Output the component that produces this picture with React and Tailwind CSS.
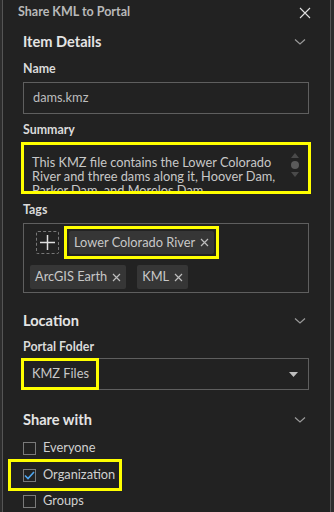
import React from "react";

const Chevron = () => (
  <svg width="12" height="8" viewBox="0 0 12 8" fill="none" stroke="#9a9a9a" strokeWidth="1.2">
    <path d="M1 1.5 L6 6 L11 1.5" />
  </svg>
);

const SmallX = () => (
  <svg width="9" height="9" viewBox="0 0 9 9" stroke="#bdbdbd" strokeWidth="1.2">
    <path d="M1 1 L8 8 M8 1 L1 8" />
  </svg>
);

const Tag = ({ label, className = "" }) => (
  <div className={`flex items-center gap-[5px] h-[23px] px-[5px] bg-[#363636] text-[12.8px] text-[#c8c8c8] rounded-[2px] ${className}`}>
    <span>{label}</span>
    <SmallX />
  </div>
);

const Check = ({ checked, label }) => (
  <div className="flex items-center h-[26px]">
    <div className="w-[13px] h-[13px] border border-[#7a7a7a] flex items-center justify-center">
      {checked && (
        <svg width="11" height="9" viewBox="0 0 11 9" fill="none" stroke="#4ea6f0" strokeWidth="1.6">
          <path d="M1 4.5 L4 7.5 L10 1" />
        </svg>
      )}
    </div>
    <span className="ml-[7px] text-[12.8px] text-[#d0d0d0]">{label}</span>
  </div>
);

export default function App() {
  return (
    <div className="w-[334px] h-[512px] overflow-hidden bg-[#2d2d2d] font-['Lato',sans-serif]">
      <div className="ml-[2px] w-[329px] h-full bg-[#222222] border-l border-r border-[#555]">
        <div className="flex items-center justify-between h-[25px] pl-[15px] pr-[19px]">
          <span className="text-[12.5px] font-bold text-[#b9b9b9]">Share KML to Portal</span>
          <svg width="12" height="12" viewBox="0 0 12 12" stroke="#e0e0e0" strokeWidth="1.1">
            <path d="M1 1 L11 11 M11 1 L1 11" />
          </svg>
        </div>

        <div className="pl-[20px] pr-[21px]">
          <div className="flex items-center justify-between h-[32px] mt-[1px]">
            <span className="text-[14.6px] font-bold text-[#e4e4e4]">Item Details</span>
            <span className="mr-[3px]"><Chevron /></span>
          </div>

          <div className="h-[20px] flex items-center mt-[1px] text-[12.4px] font-bold text-[#dadada]">Name</div>
          <div className="mt-[3px] h-[32px] border border-[#5f5f5f] flex items-center pl-[9px] text-[12.8px] text-[#bdbdbd]">
            dams.kmz
          </div>

          <div className="h-[20px] flex items-center mt-[6px] text-[12.4px] font-bold text-[#dadada]">Summary</div>
          <div className="mt-[2px] -mx-[2px] h-[52px] border-[3px] border-[#ffff00] relative overflow-hidden pl-[8px] pr-[24px] pt-[10px] text-[12.8px] leading-[14px] text-[#c8c8c8]">
            This KMZ file contains the Lower Colorado River and three dams along it, Hoover Dam, Parker Dam, and Morelos Dam.
            <div className="absolute right-[9px] top-[8px] flex flex-col items-center gap-[3px]">
              <svg width="8" height="5" viewBox="0 0 8 5"><path d="M0 5 L4 0 L8 5 Z" fill="#4a4a4a" /></svg>
              <div className="w-[8px] h-[8px] rounded-full bg-[#5a5a5a]" />
              <svg width="8" height="5" viewBox="0 0 8 5"><path d="M0 0 L4 5 L8 0 Z" fill="#4a4a4a" /></svg>
            </div>
          </div>

          <div className="h-[20px] flex items-center mt-[6px] text-[12.4px] font-bold text-[#dadada]">Tags</div>
          <div className="mt-[3px] h-[70px] border border-[#5f5f5f] pl-[6px] pt-[2px]">
            <div className="flex items-center gap-[5px]">
              <div className="ml-[6px] w-[23px] h-[23px] border border-dashed border-[#777] rounded-[2px] flex items-center justify-center">
                <svg width="15" height="15" viewBox="0 0 15 15" stroke="#e0e0e0" strokeWidth="1.5">
                  <path d="M7.5 0 V15 M0 7.5 H15" />
                </svg>
              </div>
              <div className="border-[3px] border-[#ffff00] p-[2px]">
                <Tag label="Lower Colorado River" />
              </div>
            </div>
            <div className="flex items-center gap-[11px] mt-[6px]">
              <Tag label="ArcGIS Earth" className="h-[24px]" />
              <Tag label="KML" className="h-[24px]" />
            </div>
          </div>

          <div className="flex items-center justify-between h-[32px] mt-[12px]">
            <span className="text-[14.6px] font-bold text-[#e4e4e4]">Location</span>
            <span className="mr-[3px]"><Chevron /></span>
          </div>
          <div className="h-[20px] flex items-center text-[12.4px] font-bold text-[#dadada]">Portal Folder</div>
          <div className="mt-[1px] h-[32px] border border-[#5f5f5f] flex items-center justify-between">
            <div className="-ml-[3px] h-[32px] w-[78px] border-[3px] border-[#ffff00] flex items-center pl-[8px] text-[12.8px] text-[#c8c8c8]">
              KMZ Files
            </div>
            <svg className="mr-[10px]" width="9" height="5" viewBox="0 0 9 5"><path d="M0 0 L4.5 5 L9 0 Z" fill="#bdbdbd" /></svg>
          </div>

          <div className="flex items-center justify-between h-[32px] mt-[14px]">
            <span className="text-[14.6px] font-bold text-[#e4e4e4]">Share with</span>
            <span className="mr-[3px]"><Chevron /></span>
          </div>
          <div className="-mt-[1px]">
            <Check label="Everyone" />
            <div className="-ml-[15px] -mt-[2px] -mb-[3px] w-[114px] h-[32px] border-[3px] border-[#ffff00] pl-[12px] flex items-center">
              <Check checked label="Organization" />
            </div>
            <Check label="Groups" />
          </div>
        </div>
      </div>
    </div>
  );
}
